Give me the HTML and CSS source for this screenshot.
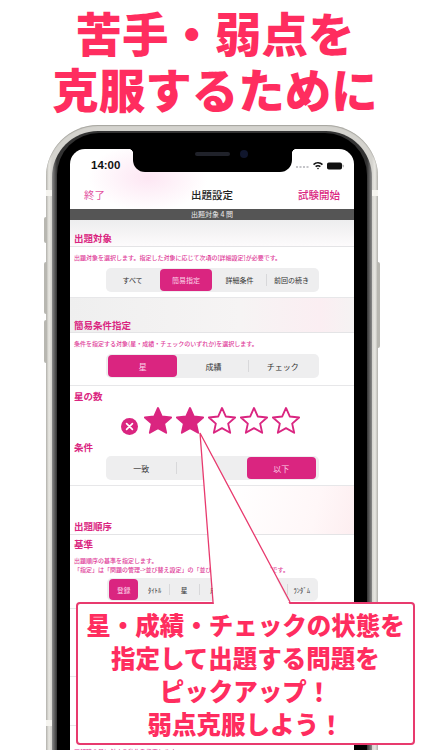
FILE: index.html
```html
<!DOCTYPE html>
<html lang="ja">
<head>
<meta charset="utf-8">
<title>出題設定</title>
<link rel="stylesheet" href="styles.css">
</head>
<body>
<svg class="defs" width="0" height="0" aria-hidden="true">
  <symbol id="star" viewBox="1.300 1.300 25.400 25.400">
    <path d="M14 2.200l3.400 7.700 8.500.9-6.300 5.600 1.800 8.300L14 20.500l-7.400 4.200 1.800-8.300-6.300-5.600 8.500-.9z"/>
  </symbol>
</svg>
<main class="page">
  <h1 class="headline">苦手・弱点を<br>克服するために</h1>
  <div class="phone">
    <span class="hw hw-a"></span><span class="hw hw-b"></span><span class="hw hw-c"></span><span class="hw hw-d"></span>
    <span class="band band-l"></span><span class="band band-r"></span><span class="band band-bl"></span>
    <div class="bezel">
      <div class="black">
        <div class="screen">
          <div class="notch"><span class="speaker"></span><span class="camera"></span></div>
          <div class="status">
            <span class="time">14:00</span>
            <span class="status-icons">
              <svg class="signal" width="13" height="4" viewBox="0 0 13 4"><g fill="#c4c4c8"><rect x="0" y="2" width="2" height="2"/><rect x="3.500" y="2" width="2" height="2"/><rect x="7" y="2" width="2" height="2"/><rect x="10.500" y="2" width="2" height="2"/></g></svg>
              <svg width="10" height="8" viewBox="0 0 10 8"><path fill="#111" d="M5 0c1.900 0 3.700.75 5 2L8.900 3.200A5.600 5.600 0 0 0 5 1.600c-1.500 0-2.900.6-3.900 1.600L0 2a7.200 7.200 0 0 1 5-2zm0 2.900c1.100 0 2.100.4 2.900 1.200L6.800 5.300A2.600 2.600 0 0 0 5 4.500c-.7 0-1.300.3-1.800.8L2.100 4.100A4.100 4.100 0 0 1 5 2.900zM5 5.800c.4 0 .8.200 1 .5L5 7.600 4 6.300c.2-.3.600-.5 1-.5z"/></svg>
              <svg width="17" height="8" viewBox="0 0 17 8"><rect x="0" y="0.500" width="15" height="7" rx="1.800" fill="#111"/><rect x="15.600" y="2.700" width="1.200" height="2.600" rx=".6" fill="#aaa"/></svg>
            </span>
          </div>
          <nav class="nav">
            <span class="nav-left">終了</span>
            <span class="nav-title">出題設定</span>
            <span class="nav-right">試験開始</span>
          </nav>
          <div class="count-bar">出題対象 4 問</div>

          <div class="band-head band-first"><h2>出題対象</h2></div>
          <section class="row row-target">
            <p class="desc">出題対象を選択します。指定した対象に応じて次項の[詳細設定]が必要です。</p>
            <div class="seg seg-small">
              <span>すべて</span><span class="on">簡易指定</span><span>詳細条件</span><span class="sep">前回の続き</span>
            </div>
          </section>

          <div class="band-head band-second"><h2>簡易条件指定</h2></div>
          <section class="row row-simple">
            <p class="desc">条件を指定する対象(星・成績・チェックのいずれか)を選択します。</p>
            <div class="seg">
              <span class="on">星</span><span>成績</span><span class="sep">チェック</span>
            </div>
          </section>
          <section class="row row-stars">
            <h3>星の数</h3>
            <div class="stars">
              <svg class="clear" width="17" height="17" viewBox="0 0 17 17"><circle cx="8.500" cy="8.500" r="8.500" fill="#da2580"/><path d="M5.600 5.600l5.800 5.800M11.400 5.600l-5.800 5.800" stroke="#fff" stroke-width="1.700" stroke-linecap="round"/></svg>
              <svg class="star full"><use href="#star"/></svg>
              <svg class="star full"><use href="#star"/></svg>
              <svg class="star"><use href="#star"/></svg>
              <svg class="star"><use href="#star"/></svg>
              <svg class="star"><use href="#star"/></svg>
            </div>
            <h3 class="cond">条件</h3>
            <div class="seg">
              <span>一致</span><span class="sep"></span><span class="on">以下</span>
            </div>
          </section>

          <div class="band-head band-third"><h2>出題順序</h2></div>
          <section class="row row-order">
            <h3>基準</h3>
            <p class="desc desc-two">出題順序の基準を指定します。<br>「指定」は「問題の管理-&gt;並び替え設定」の「並び替え」で指定した順序です。</p>
            <div class="seg seg-seven">
              <span class="on">登録</span><span>ﾀｲﾄﾙ</span><span class="sep">星</span><span class="sep">成</span><span class="sep"></span><span class="sep"></span><span class="sep">ﾗﾝﾀﾞﾑ</span>
            </div>
          </section>
          <section class="row row-h1"></section>
          <section class="row row-h2"></section>
          <section class="row row-h3"><p class="desc">正解時の星に対する動作を指定します。</p></section>
        </div>
      </div>
    </div>
  </div>

  <svg class="tail" width="110" height="175" viewBox="0 0 110 175" aria-hidden="true">
    <polygon points="10,1 24,173 100,173" fill="#fff"/>
    <polyline points="23,170 10,1 100,170" fill="none" stroke="#e83a6e" stroke-width="1.300"/>
  </svg>
  <div class="callout">星・成績・チェックの状態を<br>指定して出題する問題を<br>ピックアップ！<br>弱点克服しよう！</div>
</main>
</body>
</html>
```
FILE: styles.css
```css
* { box-sizing: border-box; }
html, body { margin: 0; padding: 0; background: #fff; }
body { width: 422px; height: 750px; overflow: hidden; font-family: "Noto Sans CJK JP", "Noto Sans", sans-serif; }
.defs { position: absolute; }
.page { position: relative; width: 422px; height: 750px; overflow: hidden; padding-top: 4px; }

.headline { margin: 0; padding-left: 8px; text-align: center; color: #ff2d5f; font-size: 46.500px; line-height: 56px; font-weight: 900; }

.phone { position: relative; width: 332px; height: 680px; margin: 9px 0 0 46px; padding: 6px 6px 0; border-radius: 52px 52px 0 0;
  background: linear-gradient(90deg, #b5b4ae 0, #e8e7e2 3px, #d4d3ce 6px, #d4d3ce calc(100% - 6px), #e8e7e2 calc(100% - 3px), #b5b4ae 100%); box-shadow: inset 0 1px 1px #a5a49e; }
.bezel { height: 100%; padding: 2px 5px 0; border-radius: 46px 46px 0 0; background: linear-gradient(90deg, #8a8a8a, #333 5px, #333 calc(100% - 5px), #8a8a8a 100%); }
.black { height: 100%; padding: 16px 13px 0; border-radius: 42px 42px 0 0; background: #000; }
.hw { position: absolute; width: 3px; background: #b8b7b1; }
.hw-a { left: -2px; top: 92px; height: 26px; border-radius: 2px 0 0 2px; }
.hw-b { left: -2px; top: 137px; height: 52px; border-radius: 2px 0 0 2px; }
.hw-c { left: -2px; top: 195px; height: 43px; border-radius: 2px 0 0 2px; }
.hw-d { right: -2px; top: 137px; height: 86px; border-radius: 0 2px 2px 0; }
.band { position: absolute; width: 6px; height: 6px; background: #f6f5f0; }
.band-l { left: 0; top: 65px; }
.band-r { right: 0; top: 65px; }
.band-bl { left: 0; top: 595px; }

.screen { position: relative; width: 284px; height: 100%; overflow: hidden; border-radius: 15px 15px 0 0; color: #333;
  background: radial-gradient(ellipse 60px 34px at 78px 28px, #fde6f3, rgba(253,230,243,0) 100%), #fff; }
.notch { position: absolute; left: 63px; top: 0; width: 159px; height: 23px; background: #000; border-radius: 0 0 12px 12px; }
.notch::before, .notch::after { content: ""; position: absolute; top: 0; width: 5px; height: 5px; }
.notch::before { left: -5px; background: radial-gradient(circle at 0 100%, transparent 5px, #000 5.500px); }
.notch::after { right: -5px; background: radial-gradient(circle at 100% 100%, transparent 5px, #000 5.500px); }
.speaker { position: absolute; left: 62px; top: 3px; width: 35px; height: 4px; background: #20222a; border-radius: 2px; }
.camera { position: absolute; left: 107px; top: 1px; width: 8px; height: 8px; border-radius: 50%; background: #10162c; }

.status { height: 34px; display: flex; justify-content: space-between; align-items: center; padding: 0 10px 0 21px; }
.time { font: 600 11.500px/1 "Liberation Sans", sans-serif; color: #111; }
.status-icons { display: flex; align-items: center; gap: 4px; }
.status-icons svg { display: block; }
.nav { height: 26px; display: flex; align-items: center; padding: 0 14px 2px; font-size: 10.500px; line-height: 1; }
.nav-left { flex: 1; color: #e2539f; }
.nav-title { color: #222; font-weight: 500; }
.nav-right { flex: 1; text-align: right; color: #da2580; font-weight: 500; }
.count-bar { height: 11px; line-height: 11px; background: #555; color: #eee; font-size: 7px; text-align: center; }

.band-head { display: flex; align-items: flex-end; padding: 0 4px; border-bottom: 1px solid #e4e4e6; }
.band-head h2 { margin: 0; font-size: 9.500px; line-height: 14px; font-weight: 700; color: #da2580; }
.band-first { height: 27px; padding-bottom: 1px; background: linear-gradient(180deg, #ededee, #fdfbfc); }
.band-second { height: 35px; background: linear-gradient(90deg, #efefef, #f6f4f4 60%, #fbeef2 88%, #f5f3f3); }
.band-third { height: 49px; padding-bottom: 1px; background: linear-gradient(105deg, #fff 55%, #fff7f8 85%, #fdeef0 100%); }

.row { padding: 0 4px; border-bottom: 1px solid #e7e7e9; background: #fff; }
h3 { margin: 0; font-size: 9.500px; line-height: 14px; font-weight: 700; color: #da2580; }
.desc { margin: 0; font-size: 6px; line-height: 9px; color: #e0409a; font-weight: 500; white-space: nowrap; }
.row > .desc:first-child { padding-top: 6px; }

.seg { display: flex; width: 213px; height: 24px; margin: 6px auto 0; padding: 1px; border-radius: 5px; background: #eeeeef; font-size: 8px; color: #333; }
.seg span { flex: 1; display: flex; align-items: center; justify-content: center; border-radius: 4px; position: relative; }
.seg span.sep::before { content: ""; position: absolute; left: 0; top: 5px; bottom: 5px; width: 1px; background: #d8d8da; }
.seg span.on { margin: 0 1.500px; background: #da2580; color: #fbd3e8; }
.seg-small { font-size: 7px; }
.seg-seven { font-size: 6.700px; }

.row-target { padding-bottom: 5px; }
.row-simple { padding-bottom: 7px; }
.row-stars { padding-top: 3px; height: 100px; }
.stars { display: flex; align-items: flex-end; gap: 4px; padding-left: 46.500px; margin-top: 4px; height: 28px; }
.clear { margin: 0 2px 0 0; flex: none; }
.star { width: 28px; height: 28px; flex: none; fill: none; stroke: #da2580; stroke-width: 1.700; stroke-linejoin: round; }
.star.full { fill: #da2580; }
.cond { margin-top: 5px; }
.row-stars .seg { margin-top: 2px; }

.row-order { padding-top: 3px; height: 74px; }
.row-order h3 { line-height: 13px; }
.desc-two { margin-top: 5px; }
.row-order .seg { margin-top: 4px; width: 211px; height: 23px; }

.row-h1 { height: 68px; }
.row-h2 { height: 49px; }
.row-h3 { height: 40px; padding-top: 15px; }

.tail { position: absolute; left: 190px; top: 432px; z-index: 2; }
.callout { position: absolute; left: 76px; top: 602px; width: 339px; height: 143px; display: flex; align-items: center; justify-content: center; text-align: center; z-index: 1;
  border: 2px solid #e83a6e; border-radius: 4px; background: #fff; color: #ff2d5f; font-size: 24.500px; line-height: 33px; font-weight: 900; }
```
